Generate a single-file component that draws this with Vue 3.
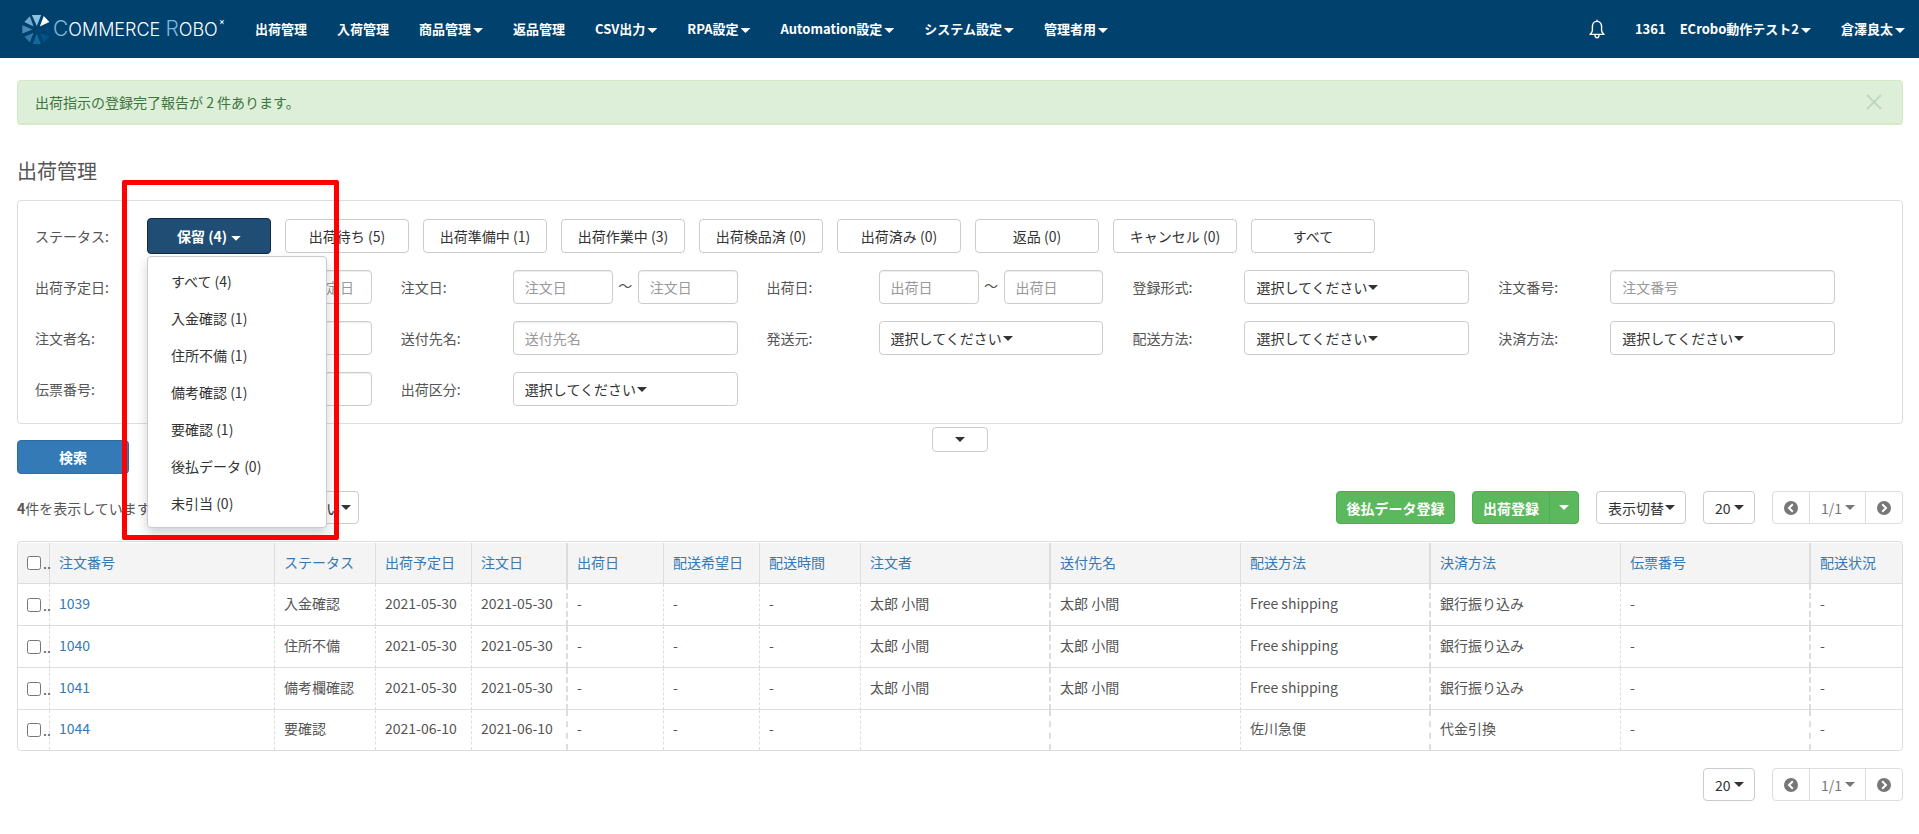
<script setup>
import { ref } from 'vue'

const nav = [
  { label: '出荷管理' },
  { label: '入荷管理' },
  { label: '商品管理', menu: true },
  { label: '返品管理' },
  { label: 'CSV出力', menu: true },
  { label: 'RPA設定', menu: true },
  { label: 'Automation設定', menu: true },
  { label: 'システム設定', menu: true },
  { label: '管理者用', menu: true }
]

const holdMenu = ['すべて (4)', '入金確認 (1)', '住所不備 (1)', '備考確認 (1)', '要確認 (1)', '後払データ (0)', '未引当 (0)']
const statuses = ['出荷待ち (5)', '出荷準備中 (1)', '出荷作業中 (3)', '出荷検品済 (0)', '出荷済み (0)', '返品 (0)', 'キャンセル (0)', 'すべて']

const fields = [
  { id: 'ship-plan', label: '出荷予定日', type: 'range' },
  { id: 'order-date', label: '注文日', type: 'range' },
  { id: 'ship-date', label: '出荷日', type: 'range' },
  { id: 'reg-type', label: '登録形式', type: 'select' },
  { id: 'order-no', label: '注文番号', type: 'text' },
  { id: 'orderer', label: '注文者名', type: 'text' },
  { id: 'recipient', label: '送付先名', type: 'text' },
  { id: 'origin', label: '発送元', type: 'select' },
  { id: 'delivery', label: '配送方法', type: 'select' },
  { id: 'payment', label: '決済方法', type: 'select' },
  { id: 'slip-no', label: '伝票番号', type: 'text' },
  { id: 'ship-class', label: '出荷区分', type: 'select' }
]

const columns = ['注文番号', 'ステータス', '出荷予定日', '注文日', '出荷日', '配送希望日', '配送時間', '注文者', '送付先名', '配送方法', '決済方法', '伝票番号', '配送状況']
const thick = [3, 7, 9, 11]
const rows = [
  ['1039', '入金確認', '2021-05-30', '2021-05-30', '-', '-', '-', '太郎 小間', '太郎 小間', 'Free shipping', '銀行振り込み', '-', '-'],
  ['1040', '住所不備', '2021-05-30', '2021-05-30', '-', '-', '-', '太郎 小間', '太郎 小間', 'Free shipping', '銀行振り込み', '-', '-'],
  ['1041', '備考欄確認', '2021-05-30', '2021-05-30', '-', '-', '-', '太郎 小間', '太郎 小間', 'Free shipping', '銀行振り込み', '-', '-'],
  ['1044', '要確認', '2021-06-10', '2021-06-10', '-', '-', '-', '', '', '佐川急便', '代金引換', '-', '-']
]

const alertOpen = ref(true)
const menuOpen = ref(true)
</script>

<template>
  <div class="page">
    <header class="topbar">
      <a href="#" class="logo" aria-label="Commerce Robo">
        <svg class="logo-mark" viewBox="39 42 86 88" aria-hidden="true">
          <polygon points="68,42 96,42 83,75" fill="#8fc1e0" />
          <polygon points="104,45 121,63 92,77" fill="#ffffff" />
          <polygon points="124,74 124,98 97,86" fill="#00457a" />
          <polygon points="121,108 104,125 93,96" fill="#005590" />
          <polygon points="71,130 95,130 83,98" fill="#0a6ca3" />
          <polygon points="45,108 62,125 73,96" fill="#3079a8" />
          <polygon points="39,73 39,98 70,86" fill="#4c88b4" />
          <polygon points="45,63 62,46 73,77" fill="#72a8cc" />
        </svg>
        <span class="wordmark"><span class="cap">C</span>OMMERCE <span class="cap">R</span>OBO</span>
        <svg class="spark" viewBox="0 0 12 12" aria-hidden="true">
          <path d="M1 1 6 4 11 1 8 6 10 11 6 8 1 11 4 6Z" fill="#dcebf5" />
        </svg>
      </a>
      <nav class="nav">
        <a v-for="n in nav" :key="n.label" href="#">{{ n.label }}<i v-if="n.menu" class="caret"></i></a>
      </nav>
      <div class="account">
        <button class="bell" type="button" aria-label="お知らせ">
          <svg viewBox="0 0 16 20" aria-hidden="true">
            <path d="M8 0.8V2.4M8 2.4C5 2.4 3.4 4.6 3.4 7.5V11.5C3.4 13 2.4 14 1 15.4H15C13.6 14 12.6 13 12.6 11.5V7.5C12.6 4.6 11 2.4 8 2.4Z" fill="none" stroke="#fff" stroke-width="1.4" stroke-linejoin="round" />
            <path d="M6 16C6 19.6 10 19.6 10 16" fill="none" stroke="#fff" stroke-width="1.4" />
          </svg>
        </button>
        <a href="#" class="shop"><span>1361</span><span>ECrobo動作テスト2<i class="caret"></i></span></a>
        <a href="#">倉澤良太<i class="caret"></i></a>
      </div>
    </header>

    <main class="content">
      <div v-if="alertOpen" class="alert" role="status">
        <span>出荷指示の登録完了報告が 2 件あります。</span>
        <button type="button" aria-label="閉じる" @click="alertOpen = false">
          <svg viewBox="0 0 16 16" aria-hidden="true"><path d="M1 1 15 15M15 1 1 15" stroke="#bfd8bc" stroke-width="2" /></svg>
        </button>
      </div>

      <h1>出荷管理</h1>

      <section class="panel">
        <div class="status-row">
          <span class="label">ステータス:</span>
          <div class="status-list">
            <div class="dropdown">
              <button type="button" class="btn active" :aria-expanded="menuOpen" @click="menuOpen = !menuOpen">保留 (4)<i class="caret"></i></button>
              <ul v-if="menuOpen" class="menu">
                <li v-for="m in holdMenu" :key="m"><a href="#">{{ m }}</a></li>
              </ul>
            </div>
            <button v-for="s in statuses" :key="s" type="button" class="btn">{{ s }}</button>
          </div>
        </div>
        <div class="fields">
          <div v-for="f in fields" :key="f.id" class="field">
            <label :for="f.id" class="label">{{ f.label }}:</label>
            <div v-if="f.type === 'range'" class="range">
              <input :id="f.id" type="text" :placeholder="f.label" />
              <span>～</span>
              <input type="text" :placeholder="f.label" :aria-label="f.label + ' 終了'" />
            </div>
            <select v-else-if="f.type === 'select'" :id="f.id" class="choose"><option>選択してください</option></select>
            <input v-else :id="f.id" type="text" :placeholder="f.label" />
          </div>
        </div>
        <div class="callout"></div>
      </section>

      <div class="actions">
        <button type="button" class="btn search">検索</button>
        <button type="button" class="btn expand" aria-label="条件を開く"><i class="caret"></i></button>
      </div>

      <div class="toolbar">
        <p class="count"><b>4</b>件を表示しています。</p>
        <select class="choose bulk" aria-label="一括操作"><option>選択してください</option></select>
        <div class="tools">
          <button type="button" class="btn green">後払データ登録</button>
          <div class="split">
            <button type="button" class="btn green">出荷登録</button>
            <button type="button" class="btn green more" aria-label="その他"><i class="caret"></i></button>
          </div>
          <select class="view" aria-label="表示切替"><option>表示切替</option></select>
          <select class="size" aria-label="表示件数"><option>20</option></select>
          <div class="pager">
            <button type="button" aria-label="前へ"><svg viewBox="0 0 14 14"><circle cx="7" cy="7" r="7" fill="#777" /><path d="M8.8 3.2 5 7 8.8 10.8" fill="none" stroke="#fff" stroke-width="2" /></svg></button>
            <select aria-label="ページ"><option>1/1</option></select>
            <button type="button" aria-label="次へ"><svg viewBox="0 0 14 14"><circle cx="7" cy="7" r="7" fill="#777" /><path d="M5.2 3.2 9 7 5.2 10.8" fill="none" stroke="#fff" stroke-width="2" /></svg></button>
          </div>
        </div>
      </div>

      <div class="table-wrap">
        <table>
          <colgroup>
            <col class="w-check" /><col /><col class="w-status" /><col class="w-date" /><col class="w-date" />
            <col class="w-date" /><col class="w-date" /><col class="w-status" />
            <col class="w-wide" /><col class="w-wide" /><col class="w-wide" /><col class="w-wide" /><col class="w-wide" /><col class="w-last" />
          </colgroup>
          <thead>
            <tr>
              <th class="check"><span><input type="checkbox" aria-label="すべて選択" />..</span></th>
              <th v-for="(c, i) in columns" :key="c" :class="{ thick: thick.includes(i) }"><a href="#">{{ c }}</a></th>
            </tr>
          </thead>
          <tbody>
            <tr v-for="r in rows" :key="r[0]">
              <td class="check"><span><input type="checkbox" :aria-label="r[0] + ' を選択'" />..</span></td>
              <td v-for="(c, i) in r" :key="i" :class="{ thick: thick.includes(i) }">
                <a v-if="i === 0" href="#">{{ c }}</a>
                <template v-else>{{ c }}</template>
              </td>
            </tr>
          </tbody>
        </table>
      </div>

      <div class="tools bottom">
        <select class="size" aria-label="表示件数"><option>20</option></select>
        <div class="pager">
          <button type="button" aria-label="前へ"><svg viewBox="0 0 14 14"><circle cx="7" cy="7" r="7" fill="#777" /><path d="M8.8 3.2 5 7 8.8 10.8" fill="none" stroke="#fff" stroke-width="2" /></svg></button>
          <select aria-label="ページ"><option>1/1</option></select>
          <button type="button" aria-label="次へ"><svg viewBox="0 0 14 14"><circle cx="7" cy="7" r="7" fill="#777" /><path d="M5.2 3.2 9 7 5.2 10.8" fill="none" stroke="#fff" stroke-width="2" /></svg></button>
        </div>
      </div>
    </main>
  </div>
</template>

<style>
body {
  margin: 0;
  background: #fff;
}
</style>

<style scoped>
.page,
.page button,
.page input,
.page select {
  font-family: "Noto Sans CJK JP", "Noto Sans", sans-serif;
  font-size: 14px;
}
.page {
  color: #555;
  line-height: 20px;
}
.page *,
.page *::before {
  box-sizing: border-box;
}
a {
  color: #337ab7;
  text-decoration: none;
}
.caret {
  display: inline-block;
  width: 10px;
  height: 5px;
  margin-left: 2px;
  vertical-align: middle;
  background: currentColor;
  clip-path: polygon(0 0, 100% 0, 50% 100%);
}

/* top bar */
.topbar {
  display: flex;
  align-items: center;
  height: 58px;
  padding: 0 14px 0 22px;
  background: #00416d;
}
.topbar a {
  color: #fff;
  font-size: 13px;
  font-weight: 700;
  white-space: nowrap;
}
.topbar .logo {
  display: flex;
  align-items: center;
  width: 204px;
  flex: none;
}
.logo-mark {
  flex: none;
  width: 29px;
  height: 29px;
}
.wordmark {
  margin-left: 2px;
  font: 300 18px/28px Inter, "Open Sans", sans-serif;
}
.cap {
  font-size: 21px;
  color: #7db4da;
}
.spark {
  flex: none;
  width: 6px;
  height: 6px;
  margin: 0 0 14px 1px;
}
.nav {
  display: flex;
  gap: 30px;
  margin-left: 29px;
}
.account {
  display: flex;
  align-items: center;
  gap: 30px;
  margin-left: auto;
}
.bell {
  padding: 0;
  border: 0;
  background: none;
}
.bell svg {
  display: block;
  width: 16px;
  height: 20px;
}
.shop {
  display: flex;
  gap: 14px;
}

.content {
  padding: 22px 16px 32px 17px;
}

.alert {
  display: flex;
  align-items: center;
  justify-content: space-between;
  height: 45px;
  padding: 0 20px 0 17px;
  border: 1px solid #d6e9c6;
  border-bottom-width: 2px;
  border-radius: 4px;
  background: #ddefd8;
  color: #3c763d;
}
.alert button {
  padding: 0;
  border: 0;
  background: none;
}
.alert svg {
  display: block;
  width: 16px;
  height: 16px;
}

h1 {
  margin: 31px 0 14px;
  font-size: 20px;
  line-height: 30px;
  font-weight: 400;
}

/* buttons and inputs */
.btn,
input[type="text"],
select {
  height: 34px;
  border: 1px solid #ccc;
  border-radius: 4px;
  background: #fff;
  color: #333;
  white-space: nowrap;
}
.btn {
  padding: 0;
  text-align: center;
}
input[type="text"] {
  width: 100%;
  min-width: 0;
  padding: 0 11px;
  box-shadow: inset 0 1px 1px rgba(0, 0, 0, 0.075);
}
input::placeholder {
  color: #999;
  opacity: 1;
}
select {
  appearance: none;
  width: 100%;
  padding: 0 11px;
  background: #fff url("data:image/svg+xml,%3Csvg xmlns='http://www.w3.org/2000/svg' width='10' height='5'%3E%3Cpath d='M0 0H10L5 5Z' fill='%23333'/%3E%3C/svg%3E") no-repeat right 10px center;
}
.choose {
  background-position: 123px center;
}

/* filter panel */
.panel {
  position: relative;
  padding: 18px 67px 17px 17px;
  border: 1px solid #ddd;
  border-radius: 4px;
}
.status-row {
  display: flex;
  align-items: center;
  height: 34px;
}
.label {
  flex: none;
  width: 112px;
}
.status-list {
  display: flex;
  align-items: center;
  gap: 14px;
}
.status-list .btn {
  width: 124px;
}
.dropdown {
  position: relative;
  z-index: 2;
}
.status-list .active {
  display: block;
  height: 36px;
  border-color: #122b40;
  background: #204d74;
  color: #fff;
  font-weight: 700;
}
.active .caret {
  margin-left: 4px;
}
.menu {
  position: absolute;
  top: 38px;
  left: 0;
  width: 180px;
  margin: 0;
  padding: 6px 0 5px;
  border: 1px solid #ccc;
  border-radius: 4px;
  background: #fff;
  box-shadow: 0 6px 12px rgba(0, 0, 0, 0.18);
  list-style: none;
}
.menu a {
  display: block;
  padding: 0 23px;
  color: #333;
  line-height: 37px;
}
.fields {
  display: grid;
  grid-template-columns: repeat(5, 1fr);
  gap: 17px 29px;
  margin-top: 17px;
}
.field {
  display: flex;
  align-items: center;
}
.range {
  display: flex;
  align-items: center;
  flex: 1;
  min-width: 0;
}
.range input {
  flex: 1;
}
.range span {
  width: 25px;
  padding-bottom: 4px;
  text-align: center;
}
.callout {
  position: absolute;
  top: -21px;
  left: 104px;
  z-index: 3;
  width: 217px;
  height: 360px;
  border: 5px solid #f00;
  border-radius: 2px;
  pointer-events: none;
}

.actions {
  display: grid;
  grid-template-columns: 1fr auto 1fr;
  margin-top: 3px;
}
.search {
  width: 112px;
  margin-top: 13px;
  border-color: #2e6da4;
  background: #337ab7;
  color: #fff;
  font-weight: 700;
}
.btn.expand {
  display: flex;
  align-items: center;
  justify-content: center;
  width: 56px;
  height: 25px;
}
.expand .caret {
  margin: 0;
}

/* list toolbar */
.toolbar {
  display: flex;
  align-items: center;
  margin: 17px 0;
}
.count {
  flex: none;
  width: 200px;
  margin: 0;
  white-space: nowrap;
}
.toolbar .btn,
.tools select,
.toolbar select {
  height: 33px;
}
.bulk {
  width: 142px;
}
.tools {
  display: flex;
  gap: 17px;
  margin-left: auto;
}
.btn.green {
  width: 119px;
  border-color: #4cae4c;
  background: #5cb85c;
  color: #fff;
  font-weight: 700;
}
.split {
  display: flex;
}
.split .green {
  width: 78px;
  border-radius: 4px 0 0 4px;
}
.split .more {
  display: flex;
  align-items: center;
  justify-content: center;
  width: 30px;
  margin-left: -1px;
  border-radius: 0 4px 4px 0;
}
.more .caret {
  margin: 0;
}
.tools .view {
  width: 90px;
}
.tools .size {
  width: 52px;
}
.pager {
  display: flex;
  border: 1px solid #ddd;
  border-radius: 4px;
  height: 33px;
}
.pager button {
  display: flex;
  align-items: center;
  justify-content: center;
  width: 36px;
  padding: 0;
  border: 0;
  background: none;
}
.pager svg {
  width: 14px;
  height: 14px;
}
.pager select {
  width: 57px;
  height: 31px;
  border-width: 0 1px;
  border-color: #ddd;
  border-radius: 0;
  color: #777;
  background-image: url("data:image/svg+xml,%3Csvg xmlns='http://www.w3.org/2000/svg' width='10' height='5'%3E%3Cpath d='M0 0H10L5 5Z' fill='%23777'/%3E%3C/svg%3E");
}
.bottom {
  justify-content: flex-end;
  margin-top: 17px;
}

/* table */
.table-wrap {
  padding-top: 1px;
  border: 1px solid #ddd;
  border-radius: 4px;
}
table {
  width: 100%;
  table-layout: fixed;
  border-collapse: separate;
  border-spacing: 0;
}
.w-check { width: 32px; }
.w-status { width: 101px; }
.w-date { width: 96px; }
.w-wide { width: 190px; }
.w-last { width: 91px; }
th,
td {
  height: 42px;
  padding: 0 9px 4px;
  border-right: 1px dashed #ddd;
  border-bottom: 1px solid #ddd;
  font-weight: 400;
  text-align: left;
  white-space: nowrap;
}
th {
  height: 41px;
  padding-bottom: 2px;
  border-right-style: solid;
  background: #f4f4f4;
}
.thick {
  border-right-width: 2px;
}
th:last-child,
td:last-child {
  border-right: 0;
}
tbody tr:last-child td {
  height: 40px;
  border-bottom: 0;
}
th.check,
td.check {
  padding: 0 0 0 9px;
}
.check span {
  display: flex;
  align-items: center;
  gap: 2px;
}
.check input {
  flex: none;
  width: 14px;
  height: 14px;
  margin: 0;
}
</style>
